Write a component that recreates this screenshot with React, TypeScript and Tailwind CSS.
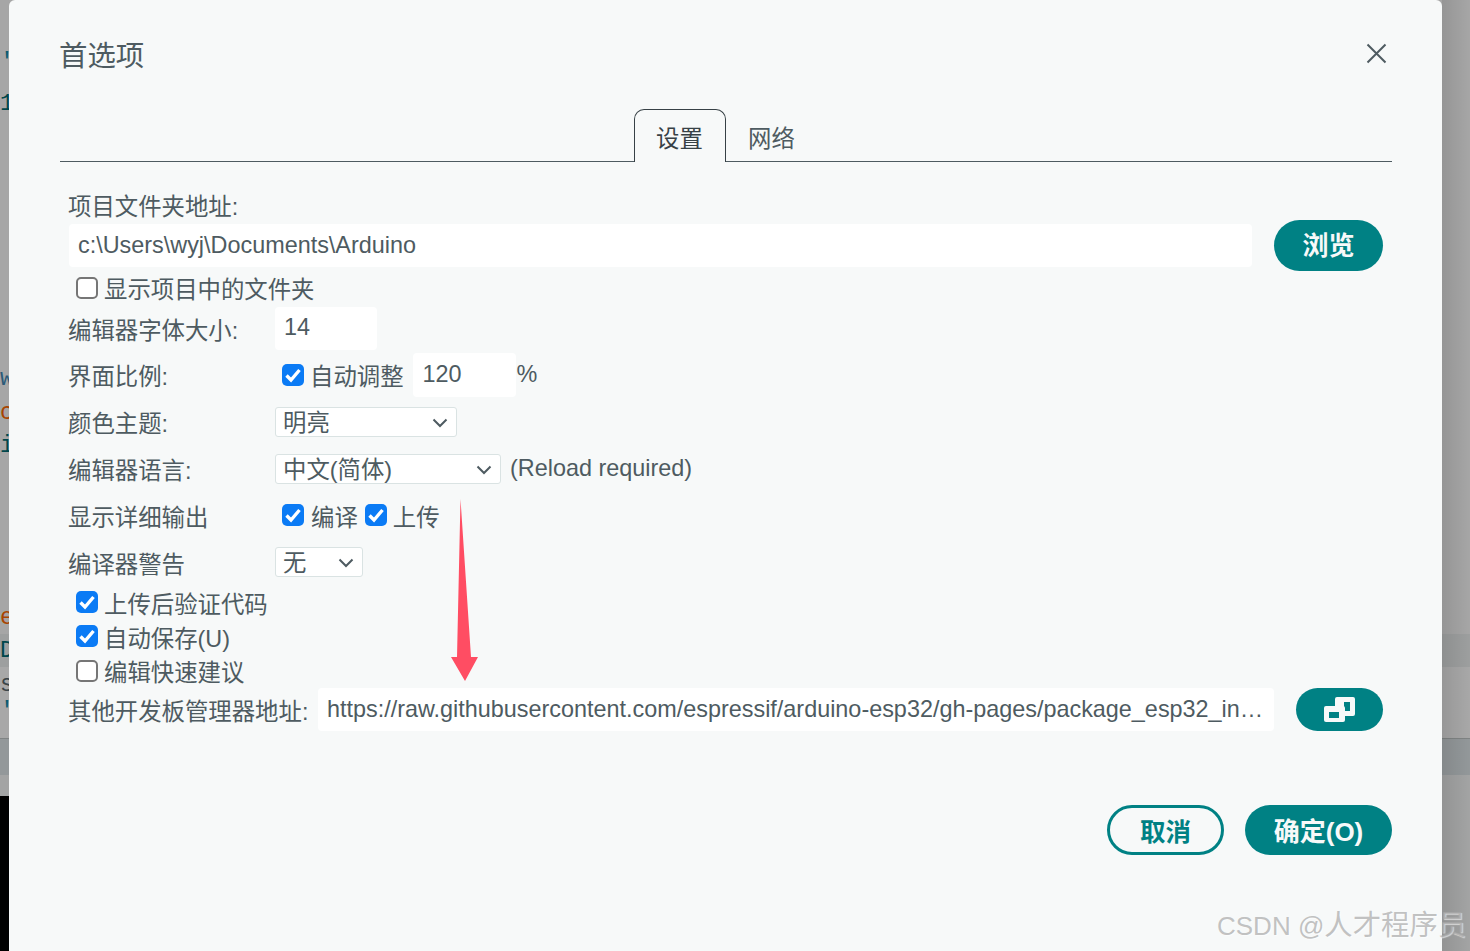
const FONT = '"Liberation Sans", "Noto Sans CJK SC", sans-serif';

const Check = ({ checked }: { checked: boolean }) =>
    checked ? (
        <span className="flex h-[22px] w-[22px] shrink-0 items-center justify-center rounded-[5px] bg-[#0b7bf5]">
            <svg width="18" height="16" viewBox="0 0 18 16" fill="none">
                <path d="M2.5 8.5l4.5 4.5 8.5-10" stroke="#fff" strokeWidth="3.4" />
            </svg>
        </span>
    ) : (
        <span className="h-[22px] w-[22px] shrink-0 rounded-[5px] border-2 border-[#767676] bg-white" />
    );

const Select = ({ value, className }: { value: string; className: string }) => (
    <div className={`flex h-[30px] items-center justify-between rounded-[3px] border border-[#dae3e3] bg-white pl-[7px] pr-[8px] ${className}`}>
        <span className="pt-1">{value}</span>
        <svg className="mt-px" width="16" height="10" viewBox="0 0 16 10" fill="none">
            <path d="M1.5 1.5L8 8l6.5-6.5" stroke="#4e5b61" strokeWidth="2" />
        </svg>
    </div>
);

const Field = ({ value, className }: { value: string; className: string }) => (
    <input
        readOnly
        value={value}
        className={`h-[43px] rounded-[4px] bg-white pl-[9px] pr-[9px] text-[#4e5b61] outline-none text-ellipsis ${className}`}
    />
);

const Label = ({ text, low }: { text: string; low?: boolean }) => (
    <div className={`-ml-px w-[207px] shrink-0 ${low ? 'pt-[8px]' : 'pt-[6px]'}`}>{text}</div>
);

export default function App() {
    return (
        <div
            className="relative flex h-[951px] w-[1470px] overflow-hidden bg-[linear-gradient(to_bottom,#a6a6a6_0,#a6a6a6_634px,#9d9f9f_634px,#9d9f9f_667px,#a8a8a8_667px,#a8a8a8_738px,#808484_738px,#808484_739px,#93989a_739px,#93989a_775px,#a3a4a4_775px,#a3a4a4_100%)] text-[23.4px] text-[#4e5b61]"
            style={{ fontFamily: FONT }}
        >
            {/* editor peeking out behind the dialog */}
            <div className="flex w-[9px] shrink-0 flex-col overflow-hidden font-['Liberation_Mono',monospace] text-[23px] leading-[24px]">
                <div className="mt-[51px] h-6 text-[#0b5c70]">'</div>
                <div className="mt-[17px] h-6 text-[#00474c]">1</div>
                <div className="mt-[251px] h-6 text-[#2c5a78]">w</div>
                <div className="mt-[10px] h-6 text-[#a84400]">c</div>
                <div className="mt-[9px] h-6 text-[#00474c]">i</div>
                <div className="mt-[148px] h-6 text-[#a84400]">e</div>
                <div className="mt-[9px] h-6 text-[#00474c]">D</div>
                <div className="mt-[10px] h-6 text-[#3a4448]">s</div>
                <div className="mt-[3px] h-6 text-[#0b5c70]">'</div>
                <div className="mt-[72px] h-[200px] shrink-0 bg-black" />
            </div>

            <div className="flex flex-1 flex-col rounded-t-[6px] bg-[#f7f9f9] pl-[51px] pr-[50px]">
                <div className="mt-[36px] flex h-[40px] items-center justify-between">
                    <div className="-ml-px text-[28.4px]">首选项</div>
                    <svg className="mb-[6px] mr-[5px]" width="21" height="21" viewBox="0 0 21 21" fill="none">
                        <path d="M1.5 1.5l18 18M19.5 1.5l-18 18" stroke="#4e5b61" strokeWidth="2" />
                    </svg>
                </div>

                <div className="mt-[33px] flex h-[53px] justify-center border-b border-[#4e5b61]">
                    <div className="z-10 flex h-[53px] w-[92px] items-center justify-center rounded-t-[10px] border-x border-t border-[#374146] bg-[#f7f9f9] pr-px pt-2 text-[#374146]">
                        设置
                    </div>
                    <div className="flex h-[53px] w-[92px] items-center justify-center pr-px pt-2">网络</div>
                </div>

                <div className="ml-[9px] flex flex-col">
                    <div className="-ml-px mt-[33px] h-6 leading-6">项目文件夹地址:</div>
                    <div className="mt-[1px] flex h-[51px] items-center">
                        <Field value="c:\Users\wyj\Documents\Arduino" className="w-[1183px]" />
                        <button className="ml-[22px] flex h-[51px] w-[109px] items-center justify-center rounded-full bg-[#008184] pt-[2px] text-[26px] font-bold text-[#f7f9f9]">
                            浏览
                        </button>
                    </div>
                    <div className="ml-[7px] mt-[6px] flex h-[22px] items-center gap-[6px]">
                        <Check checked={false} />
                        <span className="pt-[6px]">显示项目中的文件夹</span>
                    </div>
                    <div className="mt-[8px] flex h-[43px] items-center">
                        <Label text="编辑器字体大小:" />
                        <Field value="14" className="w-[102px] pb-[2px]" />
                    </div>
                    <div className="mt-[3px] flex h-[44px] items-center">
                        <Label text="界面比例:" />
                        <span className="ml-[7px]"><Check checked /></span>
                        <span className="ml-[6px] pt-[6px]">自动调整</span>
                        <Field value="120" className="ml-[9px] h-[44px] w-[103px] pb-[2px] pl-[10px]" />
                        <span className="ml-[1px]">%</span>
                    </div>
                    <div className="mt-[10px] flex h-[30px] items-center">
                        <Label text="颜色主题:" />
                        <Select value="明亮" className="w-[182px]" />
                    </div>
                    <div className="mt-[17px] flex h-[30px] items-center">
                        <Label text="编辑器语言:" />
                        <Select value="中文(简体)" className="w-[226px]" />
                        <span className="ml-[9px]">(Reload required)</span>
                    </div>
                    <div className="mt-[20px] flex h-[22px] items-center">
                        <Label text="显示详细输出" low />
                        <span className="ml-[7px]"><Check checked /></span>
                        <span className="ml-[7px] pt-[8px]">编译</span>
                        <span className="ml-[7px]"><Check checked /></span>
                        <span className="ml-[6px] pt-[8px]">上传</span>
                    </div>
                    <div className="mt-[21px] flex h-[30px] items-center">
                        <Label text="编译器警告" low />
                        <Select value="无" className="w-[88px]" />
                    </div>
                    <div className="ml-[7px] mt-[14px] flex h-[22px] items-center gap-[6px]">
                        <Check checked />
                        <span className="pt-[8px]">上传后验证代码</span>
                    </div>
                    <div className="ml-[7px] mt-[12px] flex h-[22px] items-center gap-[6px]">
                        <Check checked />
                        <span className="pt-[8px]">自动保存(U)</span>
                    </div>
                    <div className="ml-[7px] mt-[13px] flex h-[22px] items-center gap-[6px]">
                        <Check checked={false} />
                        <span className="pt-[6px]">编辑快速建议</span>
                    </div>
                    <div className="mt-[6px] flex h-[43px] items-center">
                        <div className="-ml-px w-[250px] shrink-0 pt-[6px]">其他开发板管理器地址:</div>
                        <Field
                            value="https://raw.githubusercontent.com/espressif/arduino-esp32/gh-pages/package_esp32_index.json"
                            className="w-[956px]"
                        />
                        <button className="ml-[22px] flex h-[43px] w-[87px] items-center justify-center rounded-full bg-[#008184]">
                            <svg width="32" height="26" viewBox="0 0 32 26" fill="none">
                                <path fillRule="evenodd" clipRule="evenodd" d="M13 0h16a2 2 0 0 1 2 2v15a2 2 0 0 1-2 2H13a2 2 0 0 1-2-2V2a2 2 0 0 1 2-2zm7 5v9h6V5z" fill="#f7f9f9" />
                                <rect x="0" y="9" width="21" height="16" rx="2" fill="#f7f9f9" />
                                <rect x="5" y="15" width="10" height="6" fill="#008184" />
                            </svg>
                        </button>
                    </div>
                </div>

                <div className="mt-[74px] flex justify-end gap-[21px]">
                    <button className="h-[50px] w-[117px] rounded-full border-[3px] border-[#008184] pt-1 text-[25.5px] font-bold text-[#008184]">
                        取消
                    </button>
                    <button className="h-[50px] w-[147px] rounded-full bg-[#008184] pt-1 text-[26px] font-bold text-[#f7f9f9]">
                        确定(O)
                    </button>
                </div>
            </div>

            <div className="w-[28px] shrink-0 bg-gradient-to-r from-black/10 to-transparent" />

            {/* annotation arrow */}
            <svg className="absolute left-[445px] top-[495px]" width="40" height="190" viewBox="445 495 40 190">
                <polygon points="460.5,499 471,657 478,657 465,681 451,657 457,657" fill="#ff4d63" />
            </svg>

            {/* csdn watermark */}
            <div
                className="absolute left-[1217px] top-[906px] whitespace-nowrap text-[28.4px] leading-[38px] text-[#a8a8a8]/70"
                style={{ textShadow: '1px 1px 1px rgba(255,255,255,0.6)' }}
            >
                <span className="text-[26px]">CSDN @</span>人才程序员
            </div>
        </div>
    );
}
